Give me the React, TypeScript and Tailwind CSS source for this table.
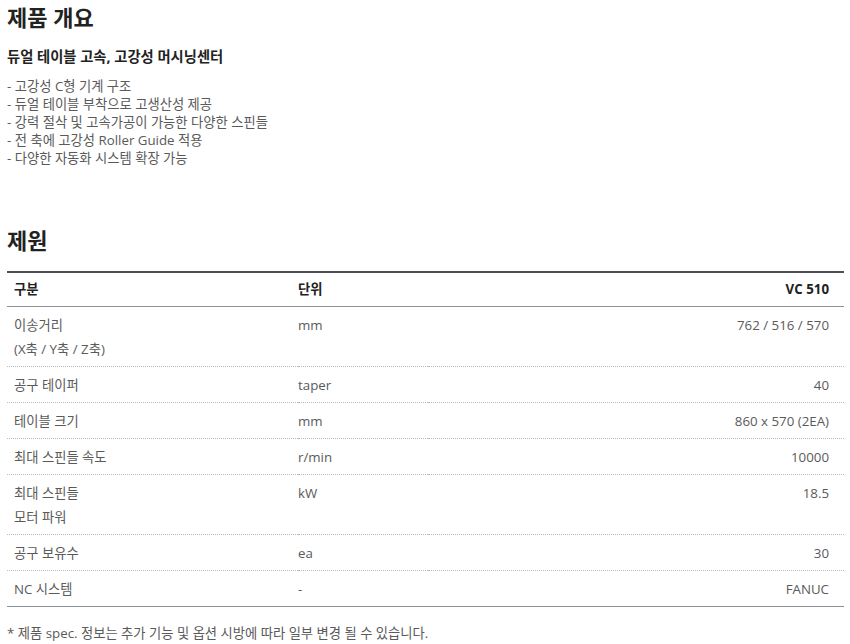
export default function App() {
  const features = [
    '- 고강성 C형 기계 구조',
    '- 듀얼 테이블 부착으로 고생산성 제공',
    '- 강력 절삭 및 고속가공이 가능한 다양한 스핀들',
    '- 전 축에 고강성 Roller Guide 적용',
    '- 다양한 자동화 시스템 확장 가능',
  ];

  const rows = [
    { name: ['이송거리', '(X축 / Y축 / Z축)'], unit: 'mm', value: '762 / 516 / 570' },
    { name: ['공구 테이퍼'], unit: 'taper', value: '40' },
    { name: ['테이블 크기'], unit: 'mm', value: '860 x 570 (2EA)' },
    { name: ['최대 스핀들 속도'], unit: 'r/min', value: '10000' },
    { name: ['최대 스핀들', '모터 파워'], unit: 'kW', value: '18.5' },
    { name: ['공구 보유수'], unit: 'ea', value: '30' },
    { name: ['NC 시스템'], unit: '-', value: 'FANUC' },
  ];

  return (
    <div className="bg-white w-[850px] h-[644px] overflow-hidden px-[7px] font-['Open_Sans','Noto_Sans_CJK_KR',sans-serif] text-[#5a5a5a]">
      {/* 제품 개요 */}
      <h2 className="text-[22px] font-bold text-[#222] leading-[34px]">제품 개요</h2>
      <h3 className="mt-[12px] text-[14.3px] font-bold text-[#222] leading-[22px]">
        듀얼 테이블 고속, 고강성 머시닝센터
      </h3>
      <ul className="mt-[9px] text-[13.3px] leading-[18px]">
        {features.map((f) => (
          <li key={f}>{f}</li>
        ))}
      </ul>

      {/* 제원 */}
      <h2 className="mt-[56px] text-[22px] font-bold text-[#222] leading-[34px]">제원</h2>
      <table className="mt-[14px] w-[837px] border-collapse text-[13.3px] leading-[24px]">
        <thead>
          <tr className="border-t-2 border-t-[#4b5058] border-b border-b-[#8a9399]">
            <th className="text-left font-bold text-[#222] pl-[7px] pt-[4px] pb-[5px] w-[291px]">구분</th>
            <th className="text-left font-bold text-[#222] pt-[4px] pb-[5px]">단위</th>
            <th className="text-right font-bold text-[#222] pr-[15px] pt-[4px] pb-[5px]">VC 510</th>
          </tr>
        </thead>
        <tbody>
          {rows.map((r, i) => (
            <tr
              key={r.value}
              className={
                i === rows.length - 1
                  ? 'border-b border-b-[#8a9399]'
                  : 'border-b border-dotted border-b-[#bbb]'
              }
            >
              <td className="pl-[7px] pt-[6px] pb-[5px] align-top">
                {r.name.map((n) => (
                  <div key={n}>{n}</div>
                ))}
              </td>
              <td className="pt-[6px] pb-[5px] align-top">{r.unit}</td>
              <td className="pr-[15px] pt-[6px] pb-[5px] align-top text-right">{r.value}</td>
            </tr>
          ))}
        </tbody>
      </table>
      <p className="mt-[17px] text-[13.3px] leading-[18px]">
        * 제품 spec. 정보는 추가 기능 및 옵션 시방에 따라 일부 변경 될 수 있습니다.
      </p>
    </div>
  );
}
